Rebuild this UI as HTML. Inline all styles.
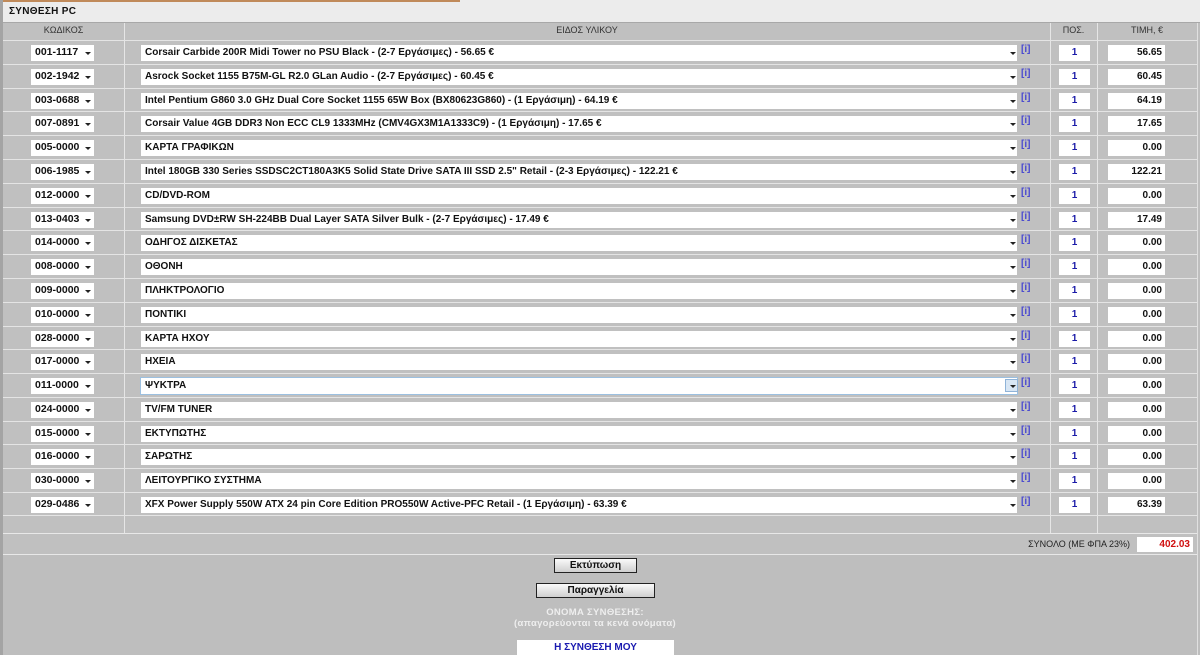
<!DOCTYPE html>
<html><head><meta charset="utf-8"><style>
*{margin:0;padding:0;box-sizing:border-box}
body{width:1200px;height:655px;overflow:hidden;background:#bebebe;font-family:"Liberation Sans","DejaVu Sans",sans-serif;position:relative}
.a{position:absolute}
.top{left:0;top:0;width:1200px;height:23px;background:#ececec;border-bottom:1px solid #a8a8a8}
.orange{left:0;top:0;width:460px;height:2px;background:#c08a5a}
.title{left:9px;top:6px;font-size:10px;font-weight:bold;color:#111;letter-spacing:.3px}
.tbl{left:3px;top:23px;width:1194px;height:531px;background:#c0c0c0}
.hd{top:25px;font-size:9px;color:#333;text-align:center}
.vl{top:23px;width:1px;height:510px;background:#e6e6e6}
.row{left:3px;width:1194px;height:24px;border-top:1px solid #e4e4e4}
.cs{left:28px;top:4px;width:63px;height:16px;background:#fff;font-size:10.5px;font-weight:bold;padding:1px 0 0 4px;color:#111}
.ds{left:138px;top:4px;width:876px;height:16px;background:#fff;font-size:10px;font-weight:bold;padding:2px 0 0 4px;color:#111;letter-spacing:0;white-space:nowrap}
.ar{position:absolute;top:7px;width:0;height:0;border-left:3px solid transparent;border-right:3px solid transparent;border-top:3px solid #222}
.cs .ar{left:54px}.ds .ar{left:869px}
.inf{left:1018px;top:3px;font-size:10px;color:#4a4ad0;font-weight:bold}
.q{left:1056px;top:4px;width:31px;height:16px;background:#fff;color:#1a1aa8;font-size:10px;font-weight:bold;text-align:center;padding-top:2px}
.p{left:1105px;top:4px;width:57px;height:16px;background:#fff;color:#111;font-size:10px;font-weight:bold;text-align:right;padding:2px 3px 0 0}
.btn{background:linear-gradient(#fafafa,#cfcfcf);border:1px solid #222;font-size:10px;font-weight:bold;text-align:center;color:#111;padding-top:1px}
.wt{color:#eee;font-size:9.5px;font-weight:bold;text-align:center;width:300px;left:445px;letter-spacing:.3px}
</style></head><body>
<div class="a top"></div><div class="a orange"></div>
<div class="a" style="left:0;top:0;width:3px;height:655px;background:#a4a4a4"></div>
<div class="a title">ΣΥΝΘΕΣΗ PC</div>
<div class="a tbl"></div>
<div class="a hd" style="left:3px;width:121px">ΚΩΔΙΚΟΣ</div>
<div class="a hd" style="left:124px;width:926px">ΕΙΔΟΣ ΥΛΙΚΟΥ</div>
<div class="a hd" style="left:1050px;width:47px">ΠΟΣ.</div>
<div class="a hd" style="left:1097px;width:100px">ΤΙΜΗ, €</div>
<div class="a vl" style="left:124px"></div>
<div class="a vl" style="left:1050px"></div>
<div class="a vl" style="left:1097px"></div>
<div class="a" style="left:1197px;top:23px;width:1px;height:632px;background:#e0e0e0"></div>

<div class="a row" style="top:40px"><div class="a cs">001-1117<i class="ar"></i></div><div class="a ds">Corsair Carbide 200R Midi Tower no PSU Black - (2-7 Εργάσιμες) - 56.65 €<i class="ar"></i></div><div class="a inf">[i]</div><div class="a q">1</div><div class="a p">56.65</div></div>
<div class="a row" style="top:63.8px"><div class="a cs">002-1942<i class="ar"></i></div><div class="a ds">Asrock Socket 1155 B75M-GL R2.0 GLan Audio - (2-7 Εργάσιμες) - 60.45 €<i class="ar"></i></div><div class="a inf">[i]</div><div class="a q">1</div><div class="a p">60.45</div></div>
<div class="a row" style="top:87.6px"><div class="a cs">003-0688<i class="ar"></i></div><div class="a ds">Intel Pentium G860 3.0 GHz Dual Core Socket 1155 65W Box (BX80623G860) - (1 Εργάσιμη) - 64.19 €<i class="ar"></i></div><div class="a inf">[i]</div><div class="a q">1</div><div class="a p">64.19</div></div>
<div class="a row" style="top:111.4px"><div class="a cs">007-0891<i class="ar"></i></div><div class="a ds">Corsair Value 4GB DDR3 Non ECC CL9 1333MHz (CMV4GX3M1A1333C9) - (1 Εργάσιμη) - 17.65 €<i class="ar"></i></div><div class="a inf">[i]</div><div class="a q">1</div><div class="a p">17.65</div></div>
<div class="a row" style="top:135.2px"><div class="a cs">005-0000<i class="ar"></i></div><div class="a ds">ΚΑΡΤΑ ΓΡΑΦΙΚΩΝ<i class="ar"></i></div><div class="a inf">[i]</div><div class="a q">1</div><div class="a p">0.00</div></div>
<div class="a row" style="top:159px"><div class="a cs">006-1985<i class="ar"></i></div><div class="a ds">Intel 180GB 330 Series SSDSC2CT180A3K5 Solid State Drive SATA III SSD 2.5" Retail - (2-3 Εργάσιμες) - 122.21 €<i class="ar"></i></div><div class="a inf">[i]</div><div class="a q">1</div><div class="a p">122.21</div></div>
<div class="a row" style="top:182.7px"><div class="a cs">012-0000<i class="ar"></i></div><div class="a ds">CD/DVD-ROM<i class="ar"></i></div><div class="a inf">[i]</div><div class="a q">1</div><div class="a p">0.00</div></div>
<div class="a row" style="top:206.5px"><div class="a cs">013-0403<i class="ar"></i></div><div class="a ds">Samsung DVD±RW SH-224BB Dual Layer SATA Silver Bulk - (2-7 Εργάσιμες) - 17.49 €<i class="ar"></i></div><div class="a inf">[i]</div><div class="a q">1</div><div class="a p">17.49</div></div>
<div class="a row" style="top:230.3px"><div class="a cs">014-0000<i class="ar"></i></div><div class="a ds">ΟΔΗΓΟΣ ΔΙΣΚΕΤΑΣ<i class="ar"></i></div><div class="a inf">[i]</div><div class="a q">1</div><div class="a p">0.00</div></div>
<div class="a row" style="top:254.1px"><div class="a cs">008-0000<i class="ar"></i></div><div class="a ds">ΟΘΟΝΗ<i class="ar"></i></div><div class="a inf">[i]</div><div class="a q">1</div><div class="a p">0.00</div></div>
<div class="a row" style="top:277.9px"><div class="a cs">009-0000<i class="ar"></i></div><div class="a ds">ΠΛΗΚΤΡΟΛΟΓΙΟ<i class="ar"></i></div><div class="a inf">[i]</div><div class="a q">1</div><div class="a p">0.00</div></div>
<div class="a row" style="top:301.7px"><div class="a cs">010-0000<i class="ar"></i></div><div class="a ds">ΠΟΝΤΙΚΙ<i class="ar"></i></div><div class="a inf">[i]</div><div class="a q">1</div><div class="a p">0.00</div></div>
<div class="a row" style="top:325.5px"><div class="a cs">028-0000<i class="ar"></i></div><div class="a ds">ΚΑΡΤΑ ΗΧΟΥ<i class="ar"></i></div><div class="a inf">[i]</div><div class="a q">1</div><div class="a p">0.00</div></div>
<div class="a row" style="top:349.3px"><div class="a cs">017-0000<i class="ar"></i></div><div class="a ds">ΗΧΕΙΑ<i class="ar"></i></div><div class="a inf">[i]</div><div class="a q">1</div><div class="a p">0.00</div></div>
<div class="a row" style="top:373.1px"><div class="a cs">011-0000<i class="ar"></i></div><div class="a ds" style="outline:1px solid #9cc0e0">ΨΥΚΤΡΑ<span class="a" style="left:864px;top:1px;width:13px;height:13px;background:#d8e6f4;border:1px solid #8fb3d8"></span><i class="ar"></i></div><div class="a inf">[i]</div><div class="a q">1</div><div class="a p">0.00</div></div>
<div class="a row" style="top:396.9px"><div class="a cs">024-0000<i class="ar"></i></div><div class="a ds">TV/FM TUNER<i class="ar"></i></div><div class="a inf">[i]</div><div class="a q">1</div><div class="a p">0.00</div></div>
<div class="a row" style="top:420.6px"><div class="a cs">015-0000<i class="ar"></i></div><div class="a ds">ΕΚΤΥΠΩΤΗΣ<i class="ar"></i></div><div class="a inf">[i]</div><div class="a q">1</div><div class="a p">0.00</div></div>
<div class="a row" style="top:444.4px"><div class="a cs">016-0000<i class="ar"></i></div><div class="a ds">ΣΑΡΩΤΗΣ<i class="ar"></i></div><div class="a inf">[i]</div><div class="a q">1</div><div class="a p">0.00</div></div>
<div class="a row" style="top:468.2px"><div class="a cs">030-0000<i class="ar"></i></div><div class="a ds">ΛΕΙΤΟΥΡΓΙΚΟ ΣΥΣΤΗΜΑ<i class="ar"></i></div><div class="a inf">[i]</div><div class="a q">1</div><div class="a p">0.00</div></div>
<div class="a row" style="top:492px"><div class="a cs">029-0486<i class="ar"></i></div><div class="a ds">XFX Power Supply 550W ATX 24 pin Core Edition PRO550W Active-PFC Retail - (1 Εργάσιμη) - 63.39 €<i class="ar"></i></div><div class="a inf">[i]</div><div class="a q">1</div><div class="a p">63.39</div></div>
<div class="a" style="left:3px;top:515px;width:1194px;height:1px;background:#e4e4e4"></div>
<div class="a" style="left:3px;top:533px;width:1194px;height:1px;background:#e8e8e8"></div>
<div class="a" style="left:3px;top:554px;width:1194px;height:1px;background:#e8e8e8"></div>
<div class="a" style="left:980px;top:539px;width:150px;font-size:9px;color:#222;text-align:right">ΣΥΝΟΛΟ (ΜΕ ΦΠΑ 23%)</div>
<div class="a" style="left:1137px;top:537px;width:56px;height:15px;background:#fff;color:#d01010;font-size:10px;font-weight:bold;text-align:right;padding:2px 3px 0 0">402.03</div>
<div class="a btn" style="left:554px;top:558px;width:83px;height:15px">Εκτύπωση</div>
<div class="a btn" style="left:536px;top:583px;width:119px;height:15px">Παραγγελία</div>
<div class="a wt" style="top:607px">ΟΝΟΜΑ ΣΥΝΘΕΣΗΣ:</div>
<div class="a wt" style="top:618px">(απαγορεύονται τα κενά ονόματα)</div>
<div class="a" style="left:517px;top:640px;width:157px;height:15px;background:#fff;color:#1a1ab0;font-size:10px;font-weight:bold;text-align:center;padding-top:2px">Η ΣΥΝΘΕΣΗ ΜΟΥ</div>
</body></html>
